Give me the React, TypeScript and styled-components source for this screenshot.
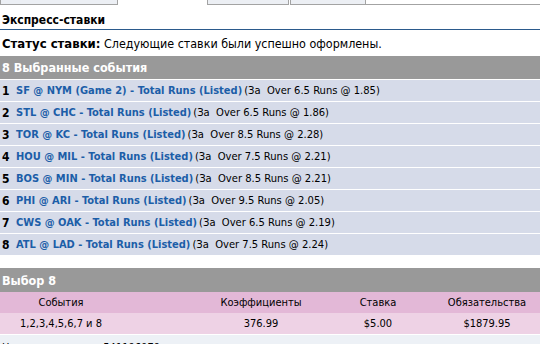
import styled, {createGlobalStyle} from 'styled-components'

const GlobalStyle = createGlobalStyle`
  html, body {
    margin: 0;
    padding: 0;
    background: #fff;
  }
  body {
    font-family: 'DejaVu Sans Condensed', 'DejaVu Sans', sans-serif;
    font-size: 11px;
    color: #000;
    overflow: hidden;
  }
`

interface Selection {
  game: string
  market: string
  pick: string
}

const selections: Selection[] = [
  {game: 'SF @ NYM (Game 2)', market: 'Total Runs (Listed)', pick: 'Over 6.5 Runs @ 1.85'},
  {game: 'STL @ CHC', market: 'Total Runs (Listed)', pick: 'Over 6.5 Runs @ 1.86'},
  {game: 'TOR @ KC', market: 'Total Runs (Listed)', pick: 'Over 8.5 Runs @ 2.28'},
  {game: 'HOU @ MIL', market: 'Total Runs (Listed)', pick: 'Over 7.5 Runs @ 2.21'},
  {game: 'BOS @ MIN', market: 'Total Runs (Listed)', pick: 'Over 8.5 Runs @ 2.21'},
  {game: 'PHI @ ARI', market: 'Total Runs (Listed)', pick: 'Over 9.5 Runs @ 2.05'},
  {game: 'CWS @ OAK', market: 'Total Runs (Listed)', pick: 'Over 6.5 Runs @ 2.19'},
  {game: 'ATL @ LAD', market: 'Total Runs (Listed)', pick: 'Over 7.5 Runs @ 2.24'},
]

const tabs = ['Купон ставок', 'Экспресс', 'История', 'Баланс']

export default function App() {
  return (
    <Page>
      <GlobalStyle />
      <TabBar>
        <Tab $width={118}>{tabs[0]}</Tab>
        <Tab $width={87} $active>{tabs[1]}</Tab>
        <Tab $width={82}>{tabs[2]}</Tab>
        <Tab $width={76}>{tabs[3]}</Tab>
        <TabFill />
      </TabBar>

      <Title>Экспресс-ставки</Title>

      <Status>
        <b>Статус ставки:</b> Следующие ставки были успешно оформлены.
      </Status>

      <SectionHeader>8 Выбранные события</SectionHeader>
      <EventList>
        {selections.map((s, i) => (
          <EventRow key={s.game}>
            <Num>{i + 1}</Num>
            <EventLink>
              {s.game} - {s.market}
            </EventLink>
            <Pick>(За&nbsp; {s.pick})</Pick>
          </EventRow>
        ))}
      </EventList>

      <SectionHeader $top={13} $height={24}>
        Выбор 8
      </SectionHeader>
      <Summary>
        <HeadCell>События</HeadCell>
        <HeadCell $shift={78}>Коэффициенты</HeadCell>
        <HeadCell>Ставка</HeadCell>
        <HeadCell>Обязательства</HeadCell>
        <DataCell>1,2,3,4,5,6,7 и 8</DataCell>
        <DataCell $shift={78}>376.99</DataCell>
        <DataCell>$5.00</DataCell>
        <DataCell>$1879.95</DataCell>
      </Summary>
      <InfoRow>
        <span>Номер ставки:</span>
        <span>541196079</span>
      </InfoRow>
    </Page>
  )
}

const Page = styled.div`
  width: 540px;
  height: 344px;
  overflow: hidden;
`
const TabBar = styled.div`
  display: flex;
  align-items: flex-end;
  height: 24px;
  margin-top: -19px;
`
const Tab = styled.div<{$width: number; $active?: boolean}>`
  box-sizing: border-box;
  width: ${p => p.$width}px;
  height: 24px;
  padding-top: 2px;
  text-align: center;
  color: #1c5ea8;
  font-weight: bold;
  background: ${p => (p.$active ? '#fff' : '#eceff4')};
  border: 1px solid #a3a3a3;
  border-bottom: ${p => (p.$active ? '1px solid transparent' : '1px solid #a3a3a3')};
  ${p => p.$active && 'border-color: transparent;'}
  & + & {
    margin-left: 1px;
  }
`
const TabFill = styled.div`
  flex: 1;
  border-bottom: 1px solid #a3a3a3;
`
const Title = styled.h2`
  margin: 0;
  padding: 6px 2px 0;
  height: 18px;
  font-size: 12px;
  font-weight: bold;
  line-height: 18px;
  border-bottom: 1px solid #2b5a8c;
`
const Status = styled.div`
  height: 26px;
  padding: 0 2px;
  font-size: 12.4px;
  line-height: 28px;

  b {
    font-size: 13px;
  }
`
const SectionHeader = styled.div<{$top?: number; $height?: number}>`
  margin-top: ${p => p.$top ?? 0}px;
  height: ${p => p.$height ?? 23}px;
  padding: 0 2px;
  background: #999999;
  color: #fff;
  font-size: 12.5px;
  font-weight: bold;
  line-height: ${p => (p.$height ?? 23) + 1}px;
`
const EventList = styled.div`
  display: flex;
  flex-direction: column;
  gap: 1px;
  padding-top: 1px;
`
const EventRow = styled.div`
  display: flex;
  align-items: center;
  height: 21px;
  padding: 0 2px;
  background: #d6dbe9;
  white-space: pre;
`
const Num = styled.b`
  width: 14px;
  font-size: 12px;
`
const EventLink = styled.a`
  color: #1c5ea8;
  font-weight: bold;
  font-size: 11px;
  text-decoration: none;
  cursor: pointer;
`
const Pick = styled.span`
  margin-left: 2px;
  font-size: 11.1px;
`
const Summary = styled.div`
  display: grid;
  grid-template-columns: 122px 200px 112px 1fr;
  grid-auto-rows: 21px;
  font-size: 11px;
  border-bottom: 1px solid #fff;
`
const HeadCell = styled.div<{$shift?: number}>`
  display: flex;
  align-items: center;
  justify-content: center;
  padding-left: ${p => p.$shift ?? 0}px;
  background: #e3b8d7;
`
const DataCell = styled(HeadCell)`
  background: #eed2e5;
`
const InfoRow = styled.div`
  display: flex;
  gap: 26px;
  height: 20px;
  padding: 6px 2px 0;
  background: #edf1f6;
  font-size: 11px;
`
